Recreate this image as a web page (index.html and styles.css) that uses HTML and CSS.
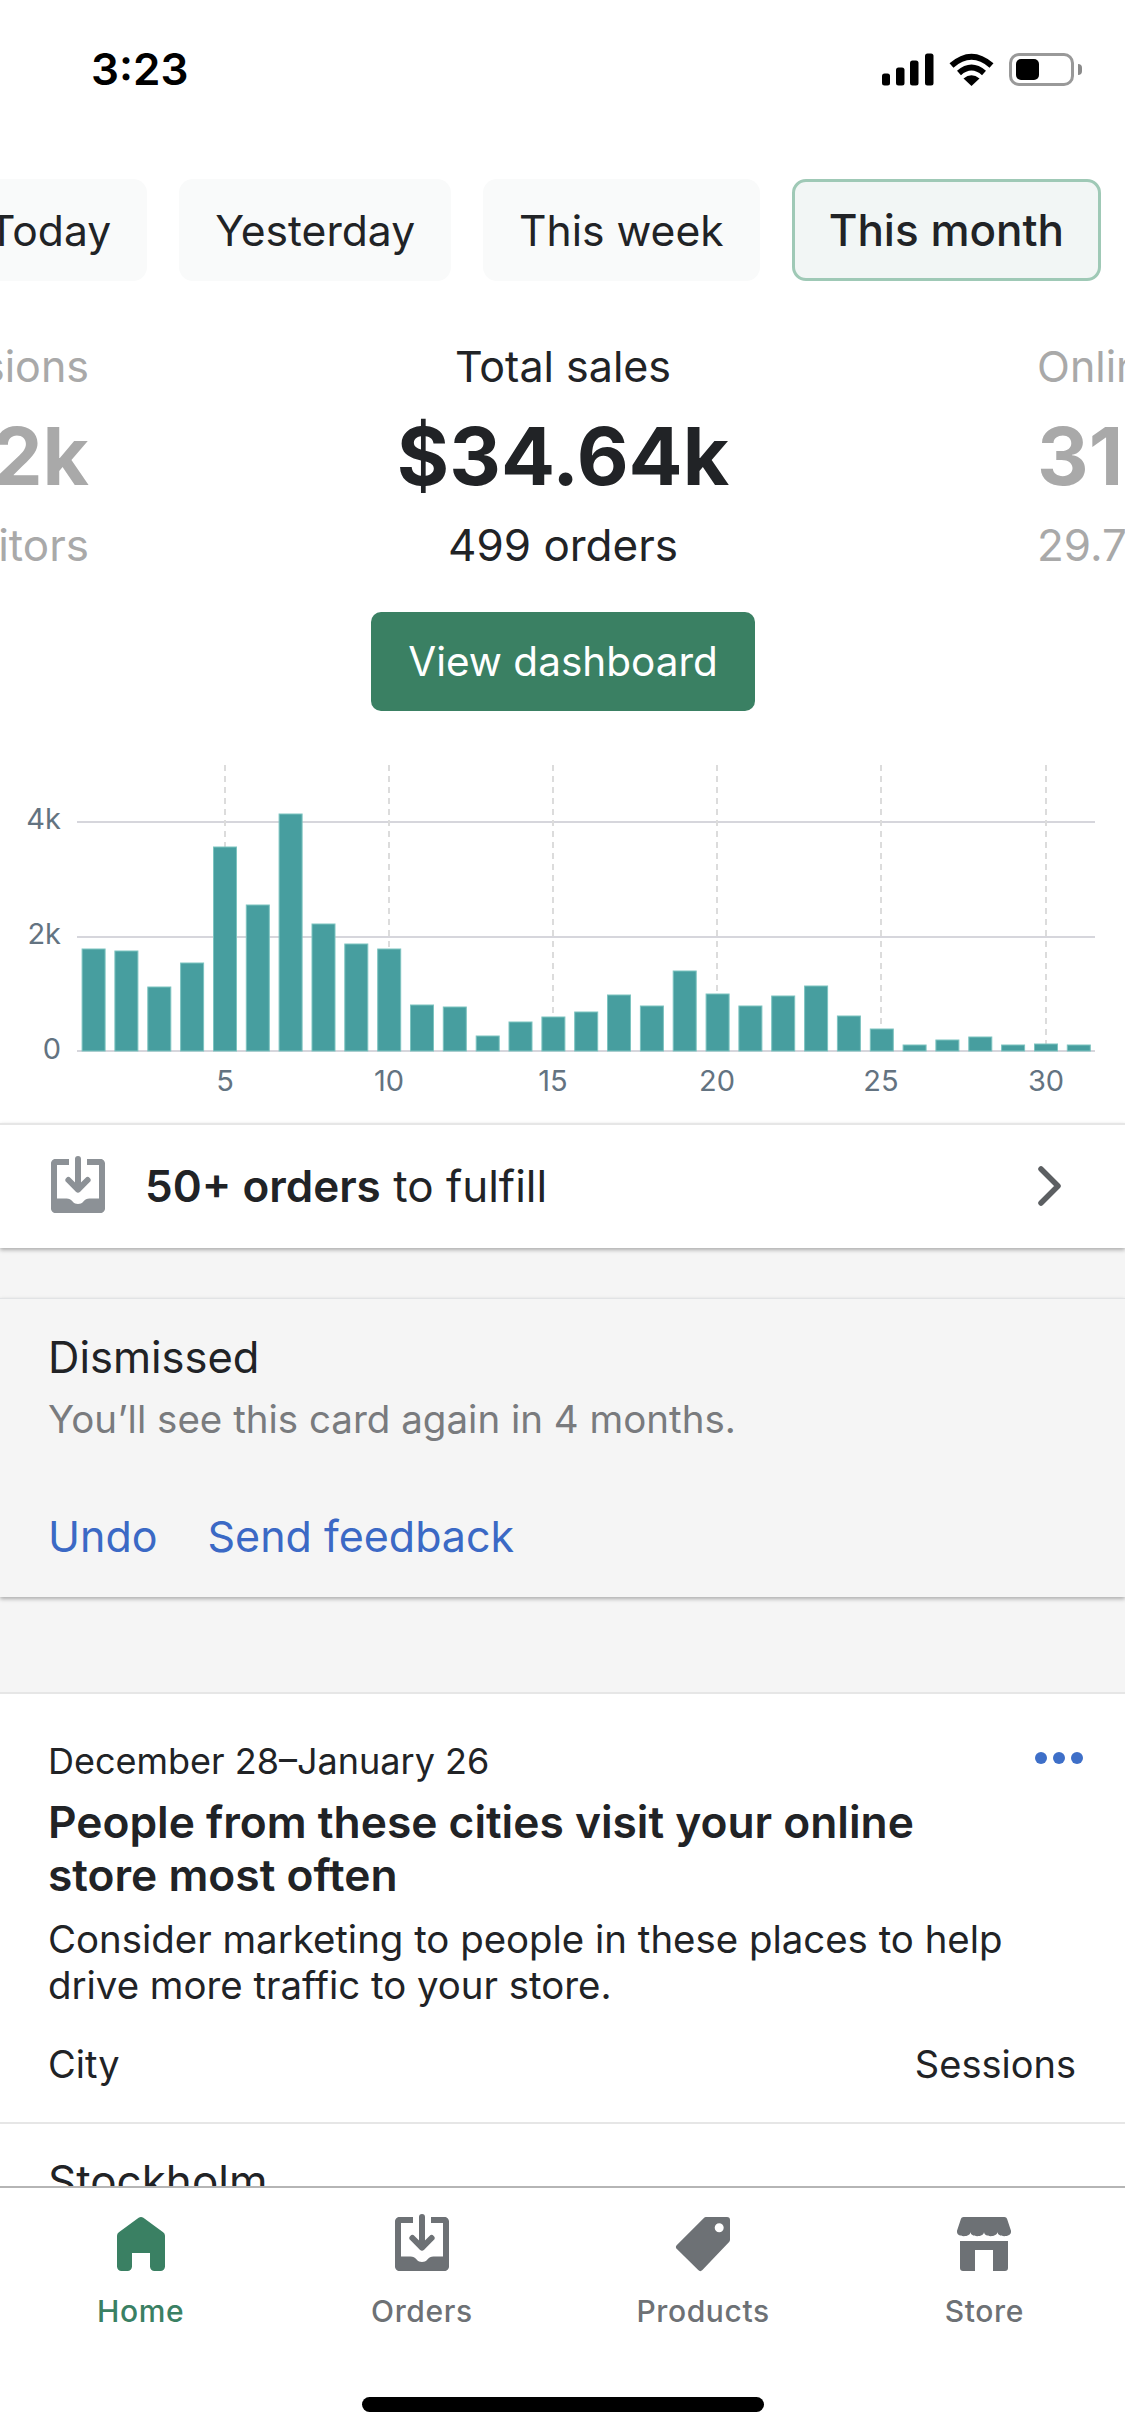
FILE: index.html
```html
<!DOCTYPE html>
<html lang="en">
<head>
    <meta charset="UTF-8">
    <meta name="viewport" content="width=device-width, initial-scale=1.0">
    <title>Home</title>
    <link rel="stylesheet" href="styles.css">
</head>
<body>
    <svg class="icon-defs" width="0" height="0">
        <symbol id="icon-orders" viewBox="0 0 20 20">
            <path fill="currentColor" d="M2.5 1H7V3H3V14.2H6.2C7 14.2 7.7 14.6 8.2 15.2C8.7 15.8 9.3 16 10 16C10.7 16 11.3 15.8 11.8 15.2C12.3 14.6 13 14.2 13.8 14.2H17V3H13V1H17.5C18.3 1 19 1.7 19 2.5V17.5C19 18.3 18.3 19 17.5 19H2.5C1.7 19 1 18.3 1 17.5V2.5C1 1.7 1.7 1 2.5 1Z"/>
            <path fill="none" stroke="currentColor" stroke-width="2" stroke-linecap="round" stroke-linejoin="round" d="M10 1V11.2M6.8 8L10 11.2L13.2 8"/>
        </symbol>
    </svg>

    <div class="app">
        <div class="status-bar">
            <span class="status-time">3:23</span>
            <div class="status-icons">
                <svg width="52" height="33" viewBox="0 0 52 33">
                    <rect x="0" y="20.5" width="8" height="12" rx="2.5"/>
                    <rect x="14" y="14.5" width="8.5" height="18" rx="2.5"/>
                    <rect x="28" y="7.5" width="8.5" height="25" rx="2.5"/>
                    <rect x="43" y="0.5" width="8.5" height="32" rx="2.5"/>
                </svg>
                <svg width="45" height="33" viewBox="0 0 45 33">
                    <path class="wifi-arc" d="M2.5 12.5Q22.5 -5 42.5 12.5"/>
                    <path class="wifi-arc" d="M10 20Q22.5 9 35 20"/>
                    <path d="M22.5 33L14.5 25.5Q22.5 19 30.5 25.5Z"/>
                </svg>
                <div class="battery">
                    <div class="battery-body"><div class="battery-level"></div></div>
                    <div class="battery-nub"></div>
                </div>
            </div>
        </div>

        <div class="scroll-area">
            <section class="overview">
                <div class="range-tabs">
                    <button class="range-tab">Today</button>
                    <button class="range-tab">Yesterday</button>
                    <button class="range-tab">This week</button>
                    <button class="range-tab range-tab-active">This month</button>
                </div>

                <div class="metrics">
                    <div class="metric metric-side metric-left">
                        <div class="metric-label">Sessions</div>
                        <div class="metric-value">32k</div>
                        <div class="metric-sub">29k visitors</div>
                    </div>
                    <div class="metric">
                        <div class="metric-label">Total sales</div>
                        <div class="metric-value">$34.64k</div>
                        <div class="metric-sub">499 orders</div>
                        <button class="primary-btn">View dashboard</button>
                    </div>
                    <div class="metric metric-side">
                        <div class="metric-label">Online store</div>
                        <div class="metric-value">31.2k</div>
                        <div class="metric-sub">29.7k visitors</div>
                    </div>
                </div>

                <svg class="chart" width="1125" height="360" viewBox="0 750 1125 360">
                    <g class="chart-grid">
                        <line x1="77" y1="822" x2="1095" y2="822"/>
                        <line x1="77" y1="937" x2="1095" y2="937"/>
                        <line x1="77" y1="1051" x2="1095" y2="1051"/>
                    </g>
                    <g class="chart-ticks">
                        <line x1="225" y1="765" x2="225" y2="1050"/>
                        <line x1="389" y1="765" x2="389" y2="1050"/>
                        <line x1="553" y1="765" x2="553" y2="1050"/>
                        <line x1="717" y1="765" x2="717" y2="1050"/>
                        <line x1="881" y1="765" x2="881" y2="1050"/>
                        <line x1="1046" y1="765" x2="1046" y2="1050"/>
                    </g>
                    <g class="chart-bars">
                        <rect x="82.1" y="949" width="23" height="102"/>
                        <rect x="114.9" y="951" width="23" height="100"/>
                        <rect x="147.8" y="987" width="23" height="64"/>
                        <rect x="180.6" y="963" width="23" height="88"/>
                        <rect x="213.5" y="847" width="23" height="204"/>
                        <rect x="246.3" y="905" width="23" height="146"/>
                        <rect x="279.1" y="814" width="23" height="237"/>
                        <rect x="312" y="924" width="23" height="127"/>
                        <rect x="344.8" y="944" width="23" height="107"/>
                        <rect x="377.7" y="949" width="23" height="102"/>
                        <rect x="410.5" y="1005" width="23" height="46"/>
                        <rect x="443.3" y="1007" width="23" height="44"/>
                        <rect x="476.2" y="1036" width="23" height="15"/>
                        <rect x="509" y="1022" width="23" height="29"/>
                        <rect x="541.9" y="1017" width="23" height="34"/>
                        <rect x="574.7" y="1012" width="23" height="39"/>
                        <rect x="607.5" y="995" width="23" height="56"/>
                        <rect x="640.4" y="1006" width="23" height="45"/>
                        <rect x="673.2" y="971" width="23" height="80"/>
                        <rect x="706.1" y="994" width="23" height="57"/>
                        <rect x="738.9" y="1006" width="23" height="45"/>
                        <rect x="771.7" y="996" width="23" height="55"/>
                        <rect x="804.6" y="986" width="23" height="65"/>
                        <rect x="837.4" y="1016" width="23" height="35"/>
                        <rect x="870.3" y="1029" width="23" height="22"/>
                        <rect x="903.1" y="1045" width="23" height="6"/>
                        <rect x="935.9" y="1040" width="23" height="11"/>
                        <rect x="968.8" y="1037" width="23" height="14"/>
                        <rect x="1001.6" y="1045" width="23" height="6"/>
                        <rect x="1034.5" y="1044" width="23" height="7"/>
                        <rect x="1067.3" y="1045" width="23" height="6"/>
                    </g>
                    <g class="chart-labels chart-labels-y">
                        <text x="61" y="829">4k</text>
                        <text x="61" y="944">2k</text>
                        <text x="61" y="1059">0</text>
                    </g>
                    <g class="chart-labels chart-labels-x">
                        <text x="225" y="1091">5</text>
                        <text x="389" y="1091">10</text>
                        <text x="553" y="1091">15</text>
                        <text x="717" y="1091">20</text>
                        <text x="881" y="1091">25</text>
                        <text x="1046" y="1091">30</text>
                    </g>
                </svg>
            </section>

            <a class="todo-row">
                <svg class="todo-icon" width="60" height="60"><use href="#icon-orders"/></svg>
                <span class="todo-text"><b>50+ orders</b> to fulfill</span>
                <svg class="chevron" width="24" height="40" viewBox="0 0 24 40">
                    <path d="M3 3L20 20L3 37"/>
                </svg>
            </a>

            <section class="dismissed">
                <div class="dismissed-title">Dismissed</div>
                <div class="dismissed-note">You’ll see this card again in 4 months.</div>
                <div class="dismissed-links">
                    <a>Undo</a>
                    <a>Send feedback</a>
                </div>
            </section>

            <section class="card">
                <div class="card-head">
                    <div class="card-date">December 28–January 26</div>
                    <svg class="card-more" width="48" height="12" viewBox="0 0 48 12">
                        <circle cx="6" cy="6" r="6"/>
                        <circle cx="24" cy="6" r="6"/>
                        <circle cx="42" cy="6" r="6"/>
                    </svg>
                </div>
                <h2 class="card-title">People from these cities visit your online store most often</h2>
                <p class="card-desc">Consider marketing to people in these places to help drive more traffic to your store.</p>
                <div class="table-head">
                    <span>City</span>
                    <span>Sessions</span>
                </div>
                <div class="table-row">Stockholm</div>
            </section>
        </div>

        <nav class="tab-bar">
            <div class="tab-items">
                <a class="tab-item tab-item-active">
                    <svg width="60" height="60" viewBox="0 0 20 20">
                        <path d="M18 7.26V17.5c0 .84-.67 1.5-1.5 1.5h-2c-.83 0-1.5-.66-1.5-1.5V13H7v4.48C7 18.32 6.33 19 5.5 19h-2C2.67 19 2 18.32 2 17.48V7.26a1.5 1.5 0 0 1 .62-1.21l6.59-4.82a1.48 1.48 0 0 1 1.58 0l6.59 4.82A1.5 1.5 0 0 1 18 7.26z"/>
                    </svg>
                    <span>Home</span>
                </a>
                <a class="tab-item">
                    <svg width="60" height="60"><use href="#icon-orders"/></svg>
                    <span>Orders</span>
                </a>
                <a class="tab-item">
                    <svg width="60" height="60" viewBox="0 0 20 20">
                        <path fill-rule="evenodd" d="M11 1H18a1 1 0 0 1 1 1V8.6a1 1 0 0 1-.3.7L9.8 18.7a1 1 0 0 1-1.4 0L1.3 11.7a1 1 0 0 1 0-1.4L10.3 1.3A1 1 0 0 1 11 1ZM15.4 3.1a1.5 1.5 0 1 0 0 3 1.5 1.5 0 0 0 0-3Z"/>
                    </svg>
                    <span>Products</span>
                </a>
                <a class="tab-item">
                    <svg width="60" height="60" viewBox="0 0 20 20">
                        <path d="M3.2 1H16.8C17.2 1 17.6 1.3 17.7 1.7L19 5.6V6C19 6.8 18 7.4 16.75 7.4C15.5 7.4 14.5 6.8 14.5 6C14.5 6.8 13.25 7.4 12.25 7.4C11 7.4 10 6.8 10 6C10 6.8 9 7.4 7.75 7.4C6.5 7.4 5.5 6.8 5.5 6C5.5 6.8 4.5 7.4 3.25 7.4C2 7.4 1 6.8 1 6V5.6L2.3 1.7C2.4 1.3 2.8 1 3.2 1Z"/>
                        <path d="M2 9H18V18C18 18.6 17.6 19 17 19H13V12H7V19H3C2.4 19 2 18.6 2 18Z"/>
                    </svg>
                    <span>Store</span>
                </a>
            </div>
            <div class="home-indicator"></div>
        </nav>
    </div>
</body>
</html>
```

FILE: styles.css
```css
* { box-sizing: border-box; }
html, body { margin: 0; padding: 0; }
body {
    font-family: Inter, "Noto Sans", sans-serif;
    font-size: 43px;
    color: #212326;
    background-color: #fff;
}
.icon-defs { position: absolute; }
.app {
    width: 1125px;
    height: 2436px;
    display: flex;
    flex-direction: column;
    overflow: hidden;
}

/* status bar */
.status-bar {
    height: 138px;
    flex: none;
    display: flex;
    align-items: center;
    justify-content: space-between;
    padding: 0 43px 0 91px;
}
.status-time {
    font-size: 44px;
    font-weight: 600;
    color: #000;
}
.status-icons {
    display: flex;
    align-items: center;
    gap: 15px;
    height: 33px;
}
.wifi-arc {
    fill: none;
    stroke: #000;
    stroke-width: 6;
}
.battery {
    display: flex;
    align-items: center;
    gap: 4px;
}
.battery-body {
    width: 65px;
    height: 33px;
    padding: 3px 4px;
    border: 3px solid #999;
    border-radius: 10px;
}
.battery-level {
    width: 23px;
    height: 21px;
    background-color: #000;
    border-radius: 5px;
}
.battery-nub {
    width: 4px;
    height: 11px;
    background-color: #8a8a8a;
    border-radius: 0 4px 4px 0;
}

.scroll-area {
    flex: 1;
    min-height: 0;
    overflow: hidden;
    background-color: #f5f5f5;
}

/* overview */
.overview {
    background-color: #fff;
    padding-top: 41px;
    padding-bottom: 13px;
}
.range-tabs {
    display: flex;
    justify-content: flex-end;
    gap: 32px;
    padding-right: 24px;
    overflow: hidden;
}
.range-tab {
    flex: none;
    height: 102px;
    padding: 0 36px;
    border: 0;
    border-radius: 14px;
    background-color: #f9fafa;
    color: #212326;
    font-family: inherit;
    font-size: 42.6px;
}
.range-tab-active {
    border: 3px solid #9fc9b6;
    background-color: #f2f6f5;
    font-size: 44px;
    font-weight: 500;
    padding: 0 34px;
}

.metrics {
    display: grid;
    grid-template-columns: 89px 1fr 88px;
    margin-top: 55px;
    white-space: nowrap;
    text-align: center;
}
.metric-side {
    color: #a9a9a9;
    overflow: hidden;
    text-align: left;
}
.metric-left {
    display: flex;
    flex-direction: column;
    align-items: flex-end;
}
.metric-label { line-height: 60px; }
.metric-value {
    font-size: 80px;
    font-weight: 700;
    line-height: 90px;
    margin-top: 15px;
}
.metric-sub {
    font-size: 44px;
    line-height: 60px;
    margin-top: 14px;
}
.primary-btn {
    display: block;
    height: 99px;
    width: 384px;
    margin: 37px auto 0;
    border: 0;
    border-radius: 10px;
    background-color: #3a8063;
    color: #fff;
    font-family: inherit;
    font-size: 40.5px;
}

.chart {
    display: block;
    margin-top: 39px;
}
.chart-grid line {
    stroke: #d6d6dc;
    stroke-width: 2;
}
.chart-ticks line {
    stroke: #dcdcdc;
    stroke-width: 2;
    stroke-dasharray: 6 5;
}
.chart-bars rect {
    fill: #479e9f;
    stroke: #7dc4c0;
    stroke-width: 1;
}
.chart-labels text {
    font-size: 29px;
    fill: #637381;
}
.chart-labels-y text { text-anchor: end; }
.chart-labels-x text { text-anchor: middle; }

/* orders to fulfill */
.todo-row {
    display: flex;
    align-items: center;
    height: 125px;
    padding: 0 63px 2px 48px;
    background-color: #fff;
    border-top: 2px solid #e6e6e6;
    box-shadow: 0 2px 4px rgba(0, 0, 0, 0.3);
    font-size: 44px;
}
.todo-icon {
    color: #8c9196;
    flex: none;
}
.todo-text {
    flex: 1;
    margin-left: 37px;
}
.todo-text b { font-weight: 600; }
.chevron path {
    fill: none;
    stroke: #5c5f62;
    stroke-width: 5.5;
    stroke-linecap: round;
    stroke-linejoin: round;
}

/* dismissed card */
.dismissed {
    margin-top: 50px;
    padding: 28px 48px 31px;
    background-color: #f5f5f5;
    border-top: 1px solid #e1e3e5;
    box-shadow: 0 2px 4px rgba(0, 0, 0, 0.3);
}
.dismissed-title { line-height: 60px; font-size: 43.5px; }
.dismissed-note {
    margin-top: 7px;
    font-size: 38.5px;
    line-height: 50px;
    color: #797b7e;
}
.dismissed-links {
    display: flex;
    gap: 50px;
    margin-top: 62px;
    line-height: 60px;
    color: #3b69c5;
}

/* insight card */
.card {
    margin-top: 95px;
    padding-top: 42px;
    background-color: #fff;
    border-top: 2px solid #e6e6e6;
}
.card-head {
    display: flex;
    align-items: center;
    justify-content: space-between;
    padding: 0 42px 0 48px;
}
.card-date {
    font-size: 36px;
    line-height: 50px;
}
.card-more {
    fill: #3e6fc8;
    margin-bottom: 6px;
}
.card-title {
    margin: 10px 150px 0 48px;
    font-size: 44.3px;
    font-weight: 600;
    line-height: 53px;
}
.card-desc {
    margin: 14px 48px 0;
    font-size: 38.4px;
    line-height: 46px;
}
.table-head {
    display: flex;
    justify-content: space-between;
    margin-top: 26px;
    padding: 0 49px 28px 48px;
    font-size: 38px;
    line-height: 60px;
    border-bottom: 2px solid #e6e6e6;
}
.table-row {
    padding: 27px 48px 0;
    font-size: 44px;
    line-height: 60px;
}

/* bottom tabs */
.tab-bar {
    height: 250px;
    flex: none;
    padding-top: 26px;
    background-color: #fff;
    border-top: 2px solid #b5b5b5;
}
.tab-items {
    display: grid;
    grid-template-columns: repeat(4, 1fr);
}
.tab-item {
    display: flex;
    flex-direction: column;
    align-items: center;
    font-size: 30px;
    font-weight: 500;
    letter-spacing: 0.6px;
    line-height: 40px;
    color: #6d7175;
    fill: #6d7175;
}
.tab-item svg { margin-bottom: 17px; }
.tab-item-active {
    color: #3a8063;
    fill: #3a8063;
}
.home-indicator {
    width: 402px;
    height: 15px;
    margin: 66px auto 0;
    border-radius: 8px;
    background-color: #000;
}
```
